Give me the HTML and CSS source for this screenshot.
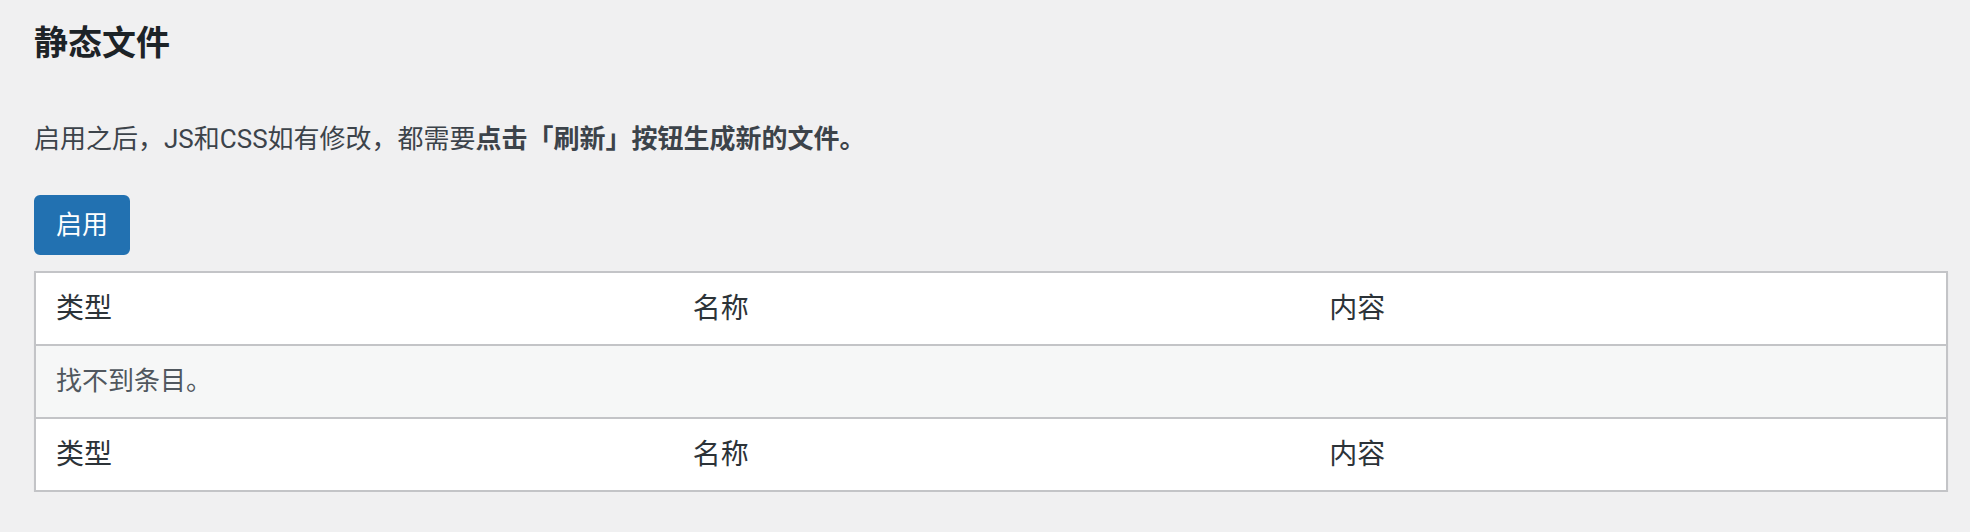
FILE: index.html
```html
<!DOCTYPE html>
<html lang="zh-CN">
<head>
    <meta charset="UTF-8">
    <meta name="viewport" content="width=device-width, initial-scale=1.0">
    <title>静态文件</title>
    <link rel="stylesheet" href="styles.css">
</head>
<body>
    <div class="wrap">
        <h2 class="page-title">静态文件</h2>

        <p class="description">启用之后，JS和CSS如有修改，都需要<strong>点击「刷新」按钮生成新的文件。</strong></p>

        <button class="button-primary" type="button">启用</button>

        <table class="widefat">
            <thead>
                <tr>
                    <th>类型</th>
                    <th>名称</th>
                    <th>内容</th>
                </tr>
            </thead>
            <tbody>
                <tr class="no-items">
                    <td colspan="3">找不到条目。</td>
                </tr>
            </tbody>
            <tfoot>
                <tr>
                    <th>类型</th>
                    <th>名称</th>
                    <th>内容</th>
                </tr>
            </tfoot>
        </table>
    </div>
</body>
</html>
```

FILE: styles.css
```css
body {
    margin: 0;
    background-color: #f0f0f1;
    color: #3c434a;
    font-family: Roboto, "Noto Sans CJK SC", sans-serif;
    font-size: 26px;
}
.wrap {
    padding: 0 22px 0 34px;
}
.page-title {
    margin: 21px 0 0;
    font-size: 34px;
    line-height: 44px;
    font-weight: 600;
    color: #1d2327;
}
.description {
    margin: 54px 0 0;
    line-height: 40px;
}
.description strong {
    font-weight: 600;
}
.button-primary {
    display: block;
    margin-top: 36px;
    height: 60px;
    padding: 0 20px;
    border: 2px solid #2271b1;
    border-radius: 6px;
    background-color: #2271b1;
    color: #fff;
    font-family: inherit;
    font-size: 26px;
    line-height: 56px;
    cursor: pointer;
}
.widefat {
    margin-top: 16px;
    width: 100%;
    table-layout: fixed;
    border-collapse: separate;
    border-spacing: 0;
    border: 2px solid #c3c4c7;
    background-color: #fff;
    box-shadow: 0 2px 2px rgba(0, 0, 0, 0.04);
}
.widefat th {
    padding: 16px 20px;
    text-align: left;
    font-size: 28px;
    line-height: 39px;
    font-weight: 400;
    color: #2c3338;
}
.widefat thead th {
    border-bottom: 2px solid #c3c4c7;
}
.widefat tfoot th {
    border-top: 2px solid #c3c4c7;
}
.widefat td {
    padding: 16px 20px;
    font-size: 26px;
    line-height: 39px;
    color: #50575e;
}
.no-items td {
    background-color: #f6f7f7;
}
```
